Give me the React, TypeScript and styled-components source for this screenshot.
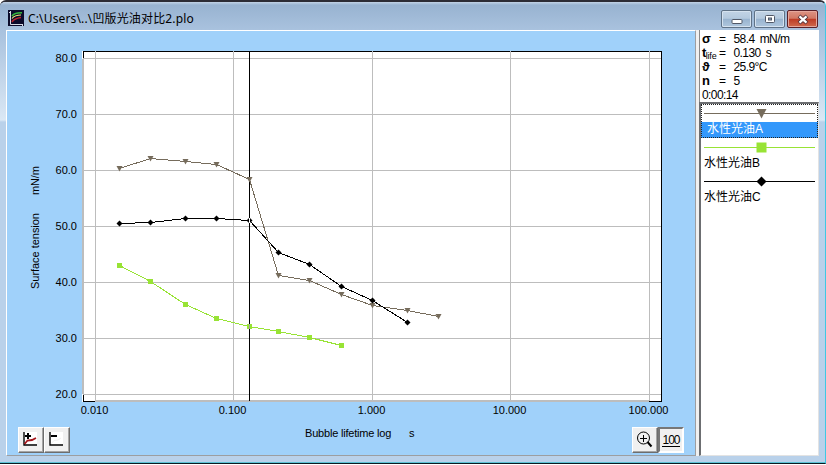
import React from "react";
import styled, { createGlobalStyle } from "styled-components";

const Global = createGlobalStyle`
  * { box-sizing: border-box; }
  body { margin: 0; background: #fff; overflow: hidden; }
`;

const sans = `"Liberation Sans", "Noto Sans CJK SC", sans-serif`;

const Window = styled.main`
  width: 826px;
  height: 464px;
  display: flex;
  flex-direction: column;
  border-top: 2px solid #2c2c35;
  border-right: 1px solid #3fc8e4;
  border-bottom: 1px solid #0b1a22;
  box-shadow: inset 0 -1px #5cc3d6;
  border-radius: 6px 6px 0 0;
  background: linear-gradient(#98b4d2 0, #a9c2de 30px, #d3e2f1 105px, #dbe8f5 118px, #b9d1ea 120px, #b9d1ea 100%);
  font-family: ${sans};
  color: #000;
`;

const TitleBar = styled.header`
  height: 28px;
  flex: none;
  display: flex;
  align-items: flex-start;
  padding: 8px 7px 0 8px;
  background: linear-gradient(#c2d3e6 0, #98b3d1 3px, #a9c2de 100%);
  border-radius: 5px 5px 0 0;
`;

const Title = styled.h1`
  margin: 0 auto 0 4px;
  font: 400 12px/17px "Noto Sans", "Noto Sans CJK SC", sans-serif;
  letter-spacing: 0.15px;
  white-space: pre;
`;

const Controls = styled.div`
  display: flex;
  gap: 2px;
`;

const ControlButton = styled.button<{ $close?: boolean }>`
  width: 31px;
  height: 18px;
  padding: 0;
  display: grid;
  place-items: center;
  border: 1px solid ${(p) => (p.$close ? "#5a2028" : "#5f7287")};
  border-radius: 2px;
  box-shadow: inset 0 0 0 1px ${(p) => (p.$close ? "#e5a79c" : "#d5e2ef")};
  background: ${(p) =>
    p.$close
      ? "linear-gradient(#dd9384 0, #d27864 46%, #bd3b25 50%, #cf6a4e 100%)"
      : "linear-gradient(#c2d3e5 0, #b4c9de 46%, #98b3cf 50%, #afc6dd 100%)"};
`;

const Body = styled.div`
  flex: 1;
  min-height: 0;
  display: flex;
  padding: 0 6px 6px 6px;
`;

const ChartPanel = styled.section`
  width: 690px;
  height: 426px;
  display: flex;
  flex-direction: column;
  background: #a0d1fa;
  border: 1px solid #9c9ea1;
  border-top-color: #fff;
  border-left-color: #fff;
`;

const Plot = styled.svg`
  display: block;
  width: 688px;
  height: 396px;
  flex: none;
  font-family: ${sans};
  font-size: 11px;
`;

const Toolbar = styled.div`
  display: flex;
  justify-content: space-between;
  padding: 0 11px;
  height: 26px;
`;

const ButtonGroup = styled.div`
  display: flex;
`;

const ToolButton = styled.button<{ $pressed?: boolean }>`
  width: 26px;
  height: 26px;
  padding: 0;
  display: grid;
  place-items: center;
  background: #f0f0f0;
  border: ${(p) => (p.$pressed ? "2px solid" : "1px solid")};
  border-color: ${(p) => (p.$pressed ? "#777 #fff #fff #777" : "#fff #6d6d6d #6d6d6d #fff")};
  box-shadow: ${(p) => (p.$pressed ? "none" : "inset -1px -1px #a5a5a5")};
`;

const Percent = styled.span`
  font: 12px/12px ${sans};
  letter-spacing: -1px;
  border-bottom: 1px solid #000;
`;

const Side = styled.aside`
  width: 123px;
  height: 426px;
  display: flex;
  flex-direction: column;
  border-left: 3px solid #f0f0f0;
`;

const Readings = styled.dl`
  margin: 0;
  height: 72px;
  padding: 2px 0 0 2px;
  background: #fff;
  border-left: 1px solid #898989;
  font-size: 12px;
  line-height: 14px;
  letter-spacing: -0.6px;
`;

const Reading = styled.div`
  display: grid;
  grid-template-columns: 17px 14.5px 1fr;
  height: 14px;
  white-space: pre;
`;

const Name = styled.dt`
  font-weight: 700;
  font-size: 13px;
  sub {
    font-size: 9px;
    font-weight: 400;
    vertical-align: -2px;
    line-height: 0;
    letter-spacing: -0.2px;
  }
`;

const Value = styled.dd`
  margin: 0;
  word-spacing: 2.5px;
`;

const Legend = styled.ul`
  flex: 1;
  margin: 0;
  padding: 0;
  list-style: none;
  background: #fff;
  border: 2px solid #6c6e71;
  border-right: 1px solid #e3e3e3;
  border-bottom: 1px solid #e3e3e3;
`;

const LegendItem = styled.li<{ $selected?: boolean }>`
  height: 34px;
  display: flex;
  flex-direction: column;
  outline: ${(p) => (p.$selected ? "1px dotted #222" : "none")};
  outline-offset: -1px;
`;

const LegendLabel = styled.span<{ $selected?: boolean }>`
  height: 16px;
  padding-left: ${(p) => (p.$selected ? 6 : 3)}px;
  font: 12px/15px "Liberation Sans", "Noto Sans CJK SC", sans-serif;
  background: ${(p) => (p.$selected ? "#3398fb" : "transparent")};
  color: ${(p) => (p.$selected ? "#fff" : "#000")};
`;

const LegendLine = styled.svg`
  display: block;
  width: 117px;
  height: 18px;
`;

const AxisCaption = styled.div`
  height: 0;
  font-size: 11px;
  line-height: 12px;
  padding-left: 298px;
  letter-spacing: -0.2px;
  white-space: pre;
  display: flex;
  gap: 18px;
`;

type Shape = "triangle" | "square" | "diamond";
type Series = { name: string; color: string; shape: Shape; points: [number, number][] };

const series: Series[] = [
  {
    name: "水性光油A", color: "#766c5c", shape: "triangle",
    points: [[119, 168], [150, 158], [185, 161], [216, 164], [249, 179], [278, 275], [309, 280], [341, 294], [372, 305], [407, 310], [438, 316]],
  },
  {
    name: "水性光油B", color: "#98e335", shape: "square",
    points: [[119, 265], [150, 281], [185, 304], [216, 318], [249, 326], [278, 331], [309, 337], [341, 345]],
  },
  {
    name: "水性光油C", color: "#000", shape: "diamond",
    points: [[119, 223], [150, 222], [185, 218], [216, 218], [249, 220], [278, 252], [309, 264], [341, 286], [372, 300], [407, 322]],
  },
];

const yTicks = [80, 70, 60, 50, 40, 30, 20].map((v, i) => ({ label: v.toFixed(1), y: 58 + i * 56 }));
const xTicks = [
  { label: "0.010", x: 95 }, { label: "0.100", x: 233 }, { label: "1.000", x: 372 },
  { label: "10.000", x: 510 }, { label: "100.000", x: 649 },
];

function Marker({ shape, x, y, r, color }: { shape: Shape; x: number; y: number; r: number; color: string }) {
  if (shape === "square") return <rect x={x - r} y={y - r} width={r * 2} height={r * 2} fill={color} />;
  const d = shape === "triangle"
    ? `M${x - r} ${y - r + 0.5}h${r * 2}l${-r} ${r * 2 - 0.5}z`
    : `M${x} ${y - r}l${r} ${r}l${-r} ${r}l${-r} ${-r}z`;
  return <path d={d} fill={color} />;
}

function Chart() {
  return (
    <Plot viewBox="7 31 688 396">
      <rect x="82" y="51" width="580" height="351" fill="#fff" />
      <g shapeRendering="crispEdges">
        <path d="M83.5 58V51.5H661.5V401.5H649M83.5 394V401.5H95" fill="none" stroke="#000" />
        <path d="M83 59V394M95 401H649" stroke="#bdbdbd" strokeWidth="2" />
        {yTicks.map((t) => <path key={t.y} d={`M83 ${t.y + 0.5}H661`} stroke="#bdbdbd" />)}
        {xTicks.map((t) => <path key={t.x} d={`M${t.x + 0.5} 51V401`} stroke="#bdbdbd" />)}
        <path d="M249.5 52V401" stroke="#000" />
        {series.map((s) => (
          <polyline key={s.name} points={s.points.map(([x, y]) => `${x + 0.5},${y + 0.5}`).join(" ")} fill="none" stroke={s.color} />
        ))}
      </g>
      {series.map((s) => s.points.map(([x, y]) => (
        <Marker key={`${s.name}${x}`} shape={s.shape} x={x + 0.5} y={y + 0.5} r={s.shape === "square" ? 2.5 : 3} color={s.color} />
      )))}
      <rect x="249" y="218" width="1" height="5" fill="#fff" />
      <rect x="249" y="324" width="1" height="5" fill="#a69aa4" />
      {yTicks.map((t) => <text key={t.y} x="77" y={t.y + 4} textAnchor="end">{t.label}</text>)}
      {xTicks.map((t) => <text key={t.x} x={t.x - 0.5} y="414" textAnchor="middle">{t.label}</text>)}
      <text transform="translate(39 289) rotate(-90)" textLength="76">Surface tension</text>
      <text transform="translate(39 195) rotate(-90)" textLength="29">mN/m</text>
    </Plot>
  );
}

export default function App() {
  return (
    <>
      <Global />
      <Window>
        <TitleBar>
          <svg width="16" height="16">
            <rect width="16" height="16" fill="#0b0b2a" />
            <path d="M2.5 1V14.5H14.5M1 2.5h1M14.5 14v2" stroke="#d8dce6" fill="none" />
            <path d="M4 6C6 3 9 3 14 2.8" stroke="#36b83d" strokeWidth="1.5" fill="none" />
            <path d="M4 8.5C6 6 9 5 13 5" stroke="#f4e87a" strokeWidth="1.2" fill="none" />
            <path d="M4 12C6 8.5 9 8 13 7.5" stroke="#b8232e" strokeWidth="1.6" fill="none" />
          </svg>
          <Title>C:\Users\..\凹版光油对比2.plo</Title>
          <Controls>
            <ControlButton aria-label="Minimize">
              <svg width="12" height="11"><rect x="1" y="5.5" width="10" height="4" rx="1" fill="#fff" stroke="#515867" /></svg>
            </ControlButton>
            <ControlButton aria-label="Maximize">
              <svg width="12" height="11"><rect x="1.5" y="1.5" width="9" height="7" rx="1" fill="#fff" stroke="#515867" /><rect x="4.5" y="4" width="3" height="2" fill="#91a7c0" stroke="#515867" /></svg>
            </ControlButton>
            <ControlButton aria-label="Close" $close>
              <svg width="12" height="11"><path d="M2 2L10 9M10 2L2 9" stroke="#53333b" strokeWidth="4" /><path d="M2.5 2.4L9.5 8.6M9.5 2.4L2.5 8.6" stroke="#fff" strokeWidth="2.2" /></svg>
            </ControlButton>
          </Controls>
        </TitleBar>
        <Body>
          <ChartPanel>
            <Chart />
            <AxisCaption><span>Bubble lifetime log</span><span>s</span></AxisCaption>
            <Toolbar>
              <ButtonGroup>
                <ToolButton aria-label="Add curve">
                  <svg width="16" height="16"><rect width="14" height="14" fill="#fff" /><path d="M1 0V13H14" stroke="#000" strokeWidth="1.4" fill="none" /><path d="M1.5 12L4.500 8.500L9 8L13 6" stroke="#a4161c" strokeWidth="1.8" fill="none" /><path d="M5 1V7M2 4H8" stroke="#000" strokeWidth="2" /></svg>
                </ToolButton>
                <ToolButton aria-label="Remove curve">
                  <svg width="16" height="16"><rect width="14" height="14" fill="#fff" /><path d="M1 0V13H14" stroke="#000" strokeWidth="1.4" fill="none" /><path d="M2 12L5 8.500L9 8L12 6" stroke="#f0f0f0" fill="none" /><path d="M2 4H8" stroke="#000" strokeWidth="2" /></svg>
                </ToolButton>
              </ButtonGroup>
              <ButtonGroup>
                <ToolButton aria-label="Zoom in">
                  <svg width="18" height="18"><circle cx="7.500" cy="7" r="6" fill="none" stroke="#000" /><path d="M4 7.500H11M7.500 4V11" stroke="#000" /><path d="M11.500 11L15.500 15.500" stroke="#000" strokeWidth="2" /></svg>
                </ToolButton>
                <ToolButton aria-label="Zoom to 100 percent" $pressed>
                  <Percent>100</Percent>
                </ToolButton>
              </ButtonGroup>
            </Toolbar>
          </ChartPanel>
          <Side>
            <Readings>
              <Reading><Name>σ</Name><span>=</span><Value>58.4 mN/m</Value></Reading>
              <Reading><Name>t<sub>life</sub></Name><span>=</span><Value>0.130 s</Value></Reading>
              <Reading><Name>ϑ</Name><span>=</span><Value>25.9°C</Value></Reading>
              <Reading><Name>n</Name><span>=</span><Value>5</Value></Reading>
              <Value>0:00:14</Value>
            </Readings>
            <Legend>
              {series.map((s, i) => (
                <LegendItem key={s.name} $selected={i === 0}>
                  <LegendLine>
                    <path d="M3 9.5H114" stroke={s.color} />
                    <Marker shape={s.shape} x={60.5} y={9.5} r={5} color={s.color} />
                  </LegendLine>
                  <LegendLabel $selected={i === 0}>{s.name}</LegendLabel>
                </LegendItem>
              ))}
            </Legend>
          </Side>
        </Body>
      </Window>
    </>
  );
}
